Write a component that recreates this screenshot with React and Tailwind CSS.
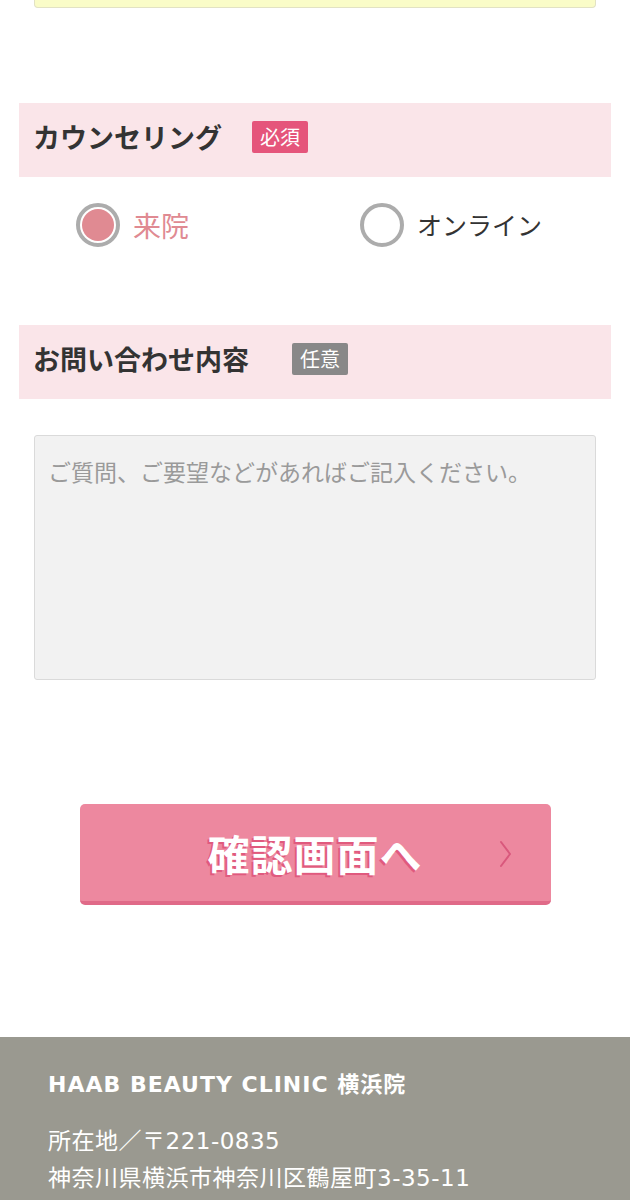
const font = { fontFamily: '"Noto Sans CJK JP", "Noto Sans", sans-serif' }
const footerFont = { fontFamily: '"DejaVu Sans", "Noto Sans CJK JP", sans-serif' }

const SectionHeader = ({ title, badge, required }) => (
  <div className="flex h-[74px] items-center bg-[#fae5e9] pb-[6px] pl-[14px]">
    <h2 className="text-[27px] font-bold text-[#333]">{title}</h2>
    <span
      className={`flex h-[32px] items-center rounded-[2px] px-[8px] text-[20px] leading-none text-white ${
        required ? 'ml-[30px] bg-[#e5557b]' : 'ml-[43px] bg-[#888888]'
      }`}
    >
      {badge}
    </span>
  </div>
)

const Radio = ({ label, checked }) => (
  <label className="flex items-center gap-[13px]">
    <span className="flex h-[44px] w-[44px] items-center justify-center rounded-full border-[4px] border-[#acacac] bg-white p-[2px]">
      {checked && <span className="h-full w-full rounded-full bg-[#e08a92]" />}
    </span>
    <span className={checked ? 'text-[28px] text-[#e08a92]' : 'text-[25px] text-[#333]'}>{label}</span>
  </label>
)

export default function App() {
  return (
    <div className="min-h-screen bg-white" style={font}>
      <div className="px-[19px]">
        {/* previous field (cut off) */}
        <div className="mx-[15px] h-[8px] rounded-b-[4px] border-x border-b border-[#e2e2c4] bg-[#fafcc8]" />

        {/* counseling */}
        <div className="mt-[95px]">
          <SectionHeader title="カウンセリング" badge="必須" required />
          <div className="flex h-[96px] items-center pl-[57px]">
            <div className="w-[284px]">
              <Radio label="来院" checked />
            </div>
            <Radio label="オンライン" />
          </div>
        </div>

        {/* inquiry */}
        <div className="mt-[52px]">
          <SectionHeader title="お問い合わせ内容" badge="任意" />
          <div className="mx-[15px] mt-[36px]">
            <textarea
              className="block h-[245px] w-full resize-none rounded-[3px] border border-[#dadada] bg-[#f2f2f2] px-[13px] pt-[18px] text-[23px] leading-[1.55] text-[#333] placeholder:text-[#9a9a9a] focus:outline-none"
              placeholder="ご質問、ご要望などがあればご記入ください。"
              style={font}
            />
          </div>
        </div>

        {/* submit */}
        <div className="mt-[124px] flex justify-center">
          <button
            type="button"
            className="relative flex h-[101px] w-[471px] items-center justify-center rounded-[5px] border-b-[4px] border-[#e06a88] bg-[#ed889f]"
          >
            <span
              className="text-[42px] font-bold tracking-[1px] text-white"
              style={{ textShadow: '-2px 2px 0 #e05a7e' }}
            >
              確認画面へ
            </span>
            <svg
              className="absolute right-[38px] top-[36px]"
              width="14"
              height="28"
              viewBox="0 0 14 28"
              fill="none"
              stroke="#d9587c"
              strokeWidth="2"
              strokeLinecap="round"
              strokeLinejoin="round"
            >
              <path d="M2 2 L11 14 L2 26" />
            </svg>
          </button>
        </div>
      </div>

      {/* footer */}
      <footer className="mt-[132px] bg-[#9a9990] px-[48px] pt-[33px] pb-[20px] text-white" style={footerFont}>
        <p className="text-[22px] font-bold leading-[30px] tracking-[1px]">HAAB BEAUTY CLINIC 横浜院</p>
        <div className="mt-[23px] text-[23px] leading-[37px] tracking-[0.5px]">
          <p>所在地／〒221-0835</p>
          <p>神奈川県横浜市神奈川区鶴屋町3-35-11</p>
        </div>
      </footer>
    </div>
  )
}
